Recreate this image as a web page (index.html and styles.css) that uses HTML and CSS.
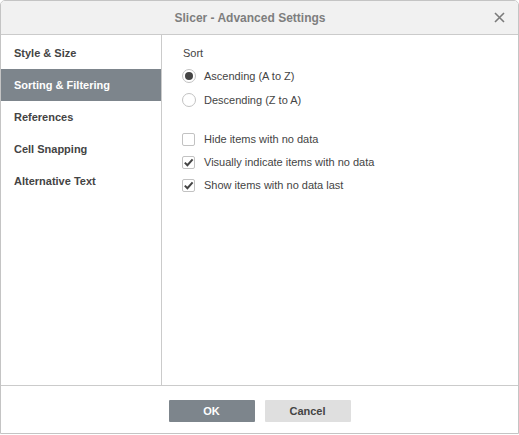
FILE: index.html
```html
<!DOCTYPE html>
<html>
<head>
<meta charset="utf-8">
<link rel="stylesheet" href="styles.css">
</head>
<body>
<div class="dialog">
  <div class="header">
    <div class="title">Slicer - Advanced Settings</div>
    <div class="close">
      <svg width="11" height="11" viewBox="0 0 11 11"><path d="M1 1 L10 10 M10 1 L1 10" stroke="#7b7b7b" stroke-width="1.6" fill="none"/></svg>
    </div>
  </div>
  <div class="main">
    <div class="sidebar">
      <div class="nav-item">Style &amp; Size</div>
      <div class="nav-item active">Sorting &amp; Filtering</div>
      <div class="nav-item">References</div>
      <div class="nav-item">Cell Snapping</div>
      <div class="nav-item">Alternative Text</div>
    </div>
    <div class="content">
      <div class="section-title">Sort</div>
      <div class="row radio-first"><span class="radio checked"></span><span>Ascending (A to Z)</span></div>
      <div class="row radio-second"><span class="radio"></span><span>Descending (Z to A)</span></div>
      <div class="row check-first"><span class="check"></span><span>Hide items with no data</span></div>
      <div class="row check-next"><span class="check checked"><svg width="11" height="11" viewBox="0 0 11 11"><path d="M1.8 5.6 L4.4 8.2 L9.6 2.4" stroke="#444" stroke-width="2" fill="none"/></svg></span><span>Visually indicate items with no data</span></div>
      <div class="row check-next"><span class="check checked"><svg width="11" height="11" viewBox="0 0 11 11"><path d="M1.8 5.6 L4.4 8.2 L9.6 2.4" stroke="#444" stroke-width="2" fill="none"/></svg></span><span>Show items with no data last</span></div>
    </div>
  </div>
  <div class="footer">
    <button class="btn btn-primary">OK</button>
    <button class="btn btn-secondary">Cancel</button>
  </div>
</div>
</body>
</html>
```

FILE: styles.css
```css
html, body {
  margin: 0;
  padding: 0;
  background: #ffffff;
}
body {
  font-family: "Liberation Sans", Arial, sans-serif;
  font-size: 11px;
  color: #444444;
}
.dialog {
  box-sizing: border-box;
  width: 519px;
  height: 434px;
  border: 1px solid #c4c4c4;
  border-radius: 5px 5px 0 0;
  display: flex;
  flex-direction: column;
  background: #ffffff;
}
.header {
  position: relative;
  height: 33px;
  border-bottom: 1px solid #cbcbcb;
  background: #f1f1f1;
  border-radius: 4px 4px 0 0;
  display: flex;
  align-items: center;
}
.title {
  flex: 1;
  text-align: center;
  padding-right: 19px;
  font-size: 12px;
  font-weight: bold;
  color: #7e7e7e;
}
.close {
  position: absolute;
  right: 13px;
  top: 11px;
  width: 11px;
  height: 11px;
  display: flex;
}
.main {
  flex: 1;
  display: flex;
  min-height: 0;
}
.sidebar {
  width: 160px;
  border-right: 1px solid #cbcbcb;
  padding-top: 2px;
}
.nav-item {
  height: 32px;
  line-height: 32px;
  padding-left: 13px;
  font-weight: bold;
  color: #444444;
}
.nav-item.active {
  background: #7d858c;
  color: #ffffff;
}
.content {
  flex: 1;
  padding: 10px 0 0 20px;
}
.section-title {
  height: 16px;
  line-height: 16px;
  padding-left: 1px;
  color: #444444;
}
.row {
  display: flex;
  align-items: center;
  height: 16px;
  line-height: 16px;
}
.radio-first { margin-top: 7px; }
.radio-second { margin-top: 8px; }
.check-first { margin-top: 23px; }
.check-next { margin-top: 7px; }
.radio {
  box-sizing: border-box;
  width: 14px;
  height: 14px;
  border: 1px solid #c2c2c2;
  border-radius: 50%;
  margin-right: 8px;
  display: flex;
  align-items: center;
  justify-content: center;
  background: #ffffff;
}
.radio.checked::after {
  content: "";
  width: 8px;
  height: 8px;
  border-radius: 50%;
  background: #444444;
}
.check {
  box-sizing: border-box;
  width: 13px;
  height: 13px;
  border: 1px solid #c2c2c2;
  border-radius: 2px;
  margin-right: 9px;
  display: flex;
  align-items: center;
  justify-content: center;
  background: #ffffff;
}
.footer {
  height: 48px;
  border-top: 1px solid #cbcbcb;
  display: flex;
  justify-content: center;
  align-items: flex-start;
  gap: 10px;
  padding-top: 14px;
  box-sizing: border-box;
}
.btn {
  width: 86px;
  height: 22px;
  border: none;
  border-radius: 1px;
  font-family: "Liberation Sans", Arial, sans-serif;
  font-size: 11px;
  font-weight: bold;
  padding: 0;
}
.btn-primary {
  background: #7d858c;
  color: #ffffff;
}
.btn-secondary {
  background: #dfdfdf;
  color: #444444;
}
```
